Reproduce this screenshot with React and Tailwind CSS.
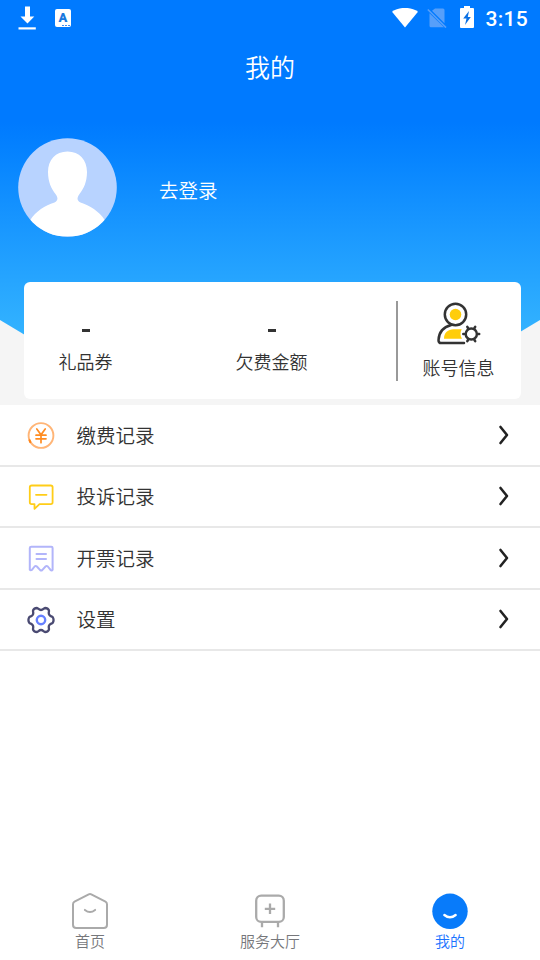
import React, { useState } from "react";

const StatusBar = () => (
  <div className="flex h-9 items-center justify-between pl-[18px] pr-3 text-white">
    <div className="flex items-center">
      <svg width="18" height="24" viewBox="0 0 18 24" fill="currentColor">
        <path d="M7 .5h5v10h4.3L9.500 17.500 2.500 10.500H7z" />
        <path d="M.5 21.300h17.300v2.200H.5z" />
      </svg>
      <div className="relative ml-[19px] flex h-[18px] w-4 items-center justify-center rounded-[2px] bg-white font-[Roboto] text-[13px] leading-none font-black text-[#1a78dd]">
        <span className="-mt-[1px]">A</span>
        <span className="absolute right-[1px] bottom-[1px] flex gap-[1px]">
          <i className="h-[1px] w-[2px] bg-[#3d8cf0]" />
          <i className="h-[1px] w-[2px] bg-[#3d8cf0]" />
          <i className="h-[1px] w-[2px] bg-[#3d8cf0]" />
        </span>
      </div>
    </div>
    <div className="flex items-center">
      <svg width="26" height="21" viewBox="0 0 26 21" fill="currentColor">
        <path d="M0 3.700C7-1.400 19-1.400 26 3.700L13 19.600z" />
      </svg>
      <svg className="ml-[9px]" width="20" height="20" viewBox="0 0 20 20">
        <path d="M8 .5h8q1.500 0 1.500 1.500v13.200L5 2.800zM2.500 5.200 17 19.300H4q-1.500 0-1.500-1.500z" fill="#569ffa" />
        <path d="M.8 1.500 19 19.600" stroke="#569ffa" strokeWidth="1.600" />
      </svg>
      <svg className="-mt-[2px] ml-[13px]" width="14" height="22" viewBox="0 0 14 22">
        <path d="M4 0h6v2h3q1 0 1 1v18q0 1-1 1H1q-1 0-1-1V3q0-1 1-1h3z" fill="currentColor" />
        <path d="M9 5 3.200 12.500h3.300L5 19l5.800-8H7.800z" fill="#0a70e4" />
      </svg>
      <span className="mt-[2px] ml-[11px] font-[Roboto] text-[21px] leading-none font-medium tracking-[0.300px]">3:15</span>
    </div>
  </div>
);

const Avatar = () => (
  <svg width="99" height="99" viewBox="0 0 99 99">
    <defs>
      <clipPath id="avatar">
        <circle cx="49.5" cy="49.5" r="49.3" />
      </clipPath>
    </defs>
    <g clipPath="url(#avatar)">
      <path d="M0 0h99v99H0z" fill="#b8d3ff" />
      <path
        d="M49.500 13.500c12 0 19.500 8.500 19.500 20.500 0 10-3.500 17-7.500 22-2.500 3.500-3 6.500 1 8.500 9 3 18.500 8.500 24.500 18v16H12V82.500c6-9.500 15-15 24.500-18 4-2 3.500-5 1-8.500C33.500 51 30 44 30 34c0-12 7.500-20.500 19.500-20.500z"
        fill="#fff"
      />
    </g>
  </svg>
);

const AccountIcon = () => (
  <svg width="44" height="44" viewBox="0 0 44 44" fill="none">
    <circle cx="18.500" cy="12.500" r="5.800" fill="#ffcd0b" />
    <path d="M7 36.700c0-6 4-9.500 9.500-9.500h8.200c-1.800 3.200-1.600 6.500.3 9.500z" fill="#ffcd0b" />
    <g stroke="#333" strokeWidth="2.500" strokeLinecap="round">
      <circle cx="18.500" cy="12.500" r="10.700" />
      <path d="M14.200 23C6.500 25 1.800 29.500 1.500 38.200c0 2 .8 2.900 2.700 2.900H27" />
      <circle cx="34.300" cy="32" r="5.600" />
      <path d="M41 32h1.200M37.500 26l.7-1.200M31 26l-.7-1.200M27.500 32h-1.200M31 38l-.7 1.200M37.500 38l.7 1.200" />
    </g>
  </svg>
);

const PaymentIcon = () => (
  <svg width="28" height="28" viewBox="0 0 28 28" fill="none" strokeLinecap="round">
    <circle cx="14" cy="14.500" r="12.400" stroke="#ffb577" strokeWidth="1.900" />
    <path d="M2.600 19.300c.2.700.4 1.100.7 1.700" stroke="#ff8519" strokeWidth="2.200" />
    <path d="m9.800 8 4.200 5.800L18.200 8M14 14v7.700M9 14.200h10M9 17.800h10" stroke="#ff8c21" strokeWidth="1.700" />
  </svg>
);

const ComplaintIcon = () => (
  <svg width="28" height="28" viewBox="0 0 28 28" fill="none" stroke="#ffcd18" strokeWidth="1.800" strokeLinecap="round" strokeLinejoin="round">
    <path d="M4.800 2.500h19q1.800 0 1.800 1.800v15q0 1.800-1.800 1.800H12.500l-5 4.800v-4.800H4.600q-1.800 0-1.800-1.800v-15q0-1.800 2-1.800z" />
    <path d="M9 11.800h10.500" />
  </svg>
);

const InvoiceIcon = () => (
  <svg width="28" height="28" viewBox="0 0 28 28" fill="none" stroke="#b2b5fa" strokeWidth="2" strokeLinecap="round" strokeLinejoin="round">
    <path d="M4.300 2.700h20q1.300 0 1.300 1.300v21.700q-.8 1.500-2.300 0l-2.500-3.200q-1.200-1-2.300 0l-3.300 3.600q-1 .8-2 0l-3.300-3.600q-1.200-1-2.300 0l-2.500 3.200q-1.500 1.200-2.300 0V4q0-1.300 1.500-1.300z" />
    <path d="M9.500 10h9.500M9.500 15h9.500" />
  </svg>
);

const SettingsIcon = () => (
  <svg width="28" height="28" viewBox="0 0 28 28" fill="none" strokeLinejoin="round">
    <path
      d="M9.800 2c1.700.3 2 2 4.200 2s2.500-1.700 4.200-2c1.500 0 3.100 1 3.700 2.300.4 1.700-.8 2.500.3 4.400 1 1.800 2.400 1.400 3.600 2.600.9 1.600.9 3.800 0 5.400-1.200 1.200-2.600.8-3.600 2.600-1.100 1.900.1 2.700-.3 4.400-.6 1.300-2.200 2.300-3.700 2.300-1.700-.3-2-2-4.200-2s-2.500 1.700-4.200 2c-1.500 0-3.100-1-3.700-2.300-.4-1.700.8-2.500-.3-4.400-1-1.800-2.400-1.400-3.600-2.600-.9-1.600-.9-3.800 0-5.400 1.200-1.200 2.600-.8 3.600-2.600 1.100-1.900-.1-2.700.3-4.400C6.700 3 8.300 2 9.800 2z"
      stroke="#4a4a72"
      strokeWidth="2.300"
    />
    <circle cx="14" cy="14" r="4.200" stroke="#6680ff" strokeWidth="2.400" />
  </svg>
);

const Chevron = () => (
  <svg width="12" height="20" viewBox="0 0 12 20" fill="none" stroke="#222" strokeWidth="2.600" strokeLinecap="round" strokeLinejoin="round">
    <path d="m2.500 2 6.500 8-6.500 8" />
  </svg>
);

const HomeIcon = () => (
  <svg width="36" height="36" viewBox="0 0 36 36" fill="none" stroke="#aaa" strokeWidth="2" strokeLinecap="round" strokeLinejoin="round">
    <path d="M16.700 1.400q1.300-.6 2.600 0L33.500 8.600q1.500.8 1.500 2.600v20.500q0 3.300-3.300 3.300H4.300Q1 35 1 31.700V11.200q0-1.800 1.500-2.600z" />
    <path d="M12.900 16.900q5.100 4.200 10.200 0" />
  </svg>
);

const ServiceIcon = () => (
  <svg width="36" height="36" viewBox="0 0 36 36" fill="none" stroke="#aaa" strokeWidth="2.300">
    <rect x="4.200" y="2.700" width="27.600" height="26.200" rx="5" />
    <path d="M18 10.500v10.500M12.800 15.800h10.400M10 29v5.300M26 29v5.300" />
  </svg>
);

const MineIcon = () => (
  <svg width="36" height="36" viewBox="0 0 36 36" fill="none">
    <circle cx="18" cy="18.300" r="17.700" fill="#087bfa" />
    <path d="M12.400 22q5.600 4.600 11.200 0" stroke="#fff" strokeWidth="2.500" strokeLinecap="round" />
  </svg>
);

const menu = [
  { label: "缴费记录", Icon: PaymentIcon },
  { label: "投诉记录", Icon: ComplaintIcon },
  { label: "开票记录", Icon: InvoiceIcon },
  { label: "设置", Icon: SettingsIcon },
];

const tabs = [
  { label: "首页", Icon: HomeIcon },
  { label: "服务大厅", Icon: ServiceIcon },
  { label: "我的", Icon: MineIcon },
];

const Stat = ({ label }) => (
  <div className="flex h-full flex-col items-center pt-[47px]">
    <span className="h-[3px] w-2 bg-[#333]" />
    <span className="mt-4 text-[18px] leading-[26px]">{label}</span>
  </div>
);

const App = () => {
  const [active, setActive] = useState("我的");

  return (
    <div className="flex h-[960px] w-[540px] flex-col overflow-hidden bg-white font-['Noto_Sans_CJK_SC_DemiLight','Noto_Sans_CJK_SC',sans-serif] font-[350] text-[#333]">
      <div className="h-[405px] shrink-0 bg-[#f5f5f5]">
        {/* Header */}
        <header className="h-[335px] bg-linear-to-b from-[#007aff] from-[122px] to-[#33b3ff] text-white [clip-path:polygon(0_0,100%_0,100%_320px,515px_335px,25px_335px,0_320px)]">
          <StatusBar />
          <h1 className="mt-3 text-center text-[25px] leading-9">我的</h1>
          <div className="mt-[54px] flex items-center pl-[18px]">
            <Avatar />
            <span className="mt-1 ml-[42px] text-[19.500px] leading-7">去登录</span>
          </div>
        </header>

        {/* Account summary */}
        <section className="relative mr-[19.500px] -mt-[53px] ml-6 flex h-[117px] rounded-md bg-white">
          <div className="w-[123px]">
            <Stat label="礼品券" />
          </div>
          <div className="w-[249px]">
            <Stat label="欠费金额" />
          </div>
          <div className="mt-[19px] h-20 w-[1.500px] bg-[#999]" />
          <div className="flex flex-1 flex-col items-center pt-5 pr-[1px]">
            <AccountIcon />
            <span className="mt-2 text-[18px] leading-[26px]">账号信息</span>
          </div>
        </section>
      </div>

      {/* Menu */}
      <ul className="flex-1">
        {menu.map(({ label, Icon }) => (
          <li
            key={label}
            className="flex h-[61.500px] cursor-pointer items-center border-b-2 border-[#e8e8e8] pr-[30px] pl-[27px]"
          >
            <div className="pt-[1px]">
              <Icon />
            </div>
            <span className="ml-[21.500px] flex-1 text-[19.500px] leading-7">{label}</span>
            <Chevron />
          </li>
        ))}
      </ul>

      {/* Bottom tabs */}
      <nav className="flex h-[67px] shrink-0">
        {tabs.map(({ label, Icon }) => (
          <button
            key={label}
            onClick={() => setActive(label)}
            className={`flex flex-1 cursor-pointer flex-col items-center text-[15px] leading-[22px] ${
              active === label ? "text-[#1b73ff]" : "text-[#76777b]"
            }`}
          >
            <Icon />
            <span className="mt-[1px]">{label}</span>
          </button>
        ))}
      </nav>
    </div>
  );
};

export default App;
